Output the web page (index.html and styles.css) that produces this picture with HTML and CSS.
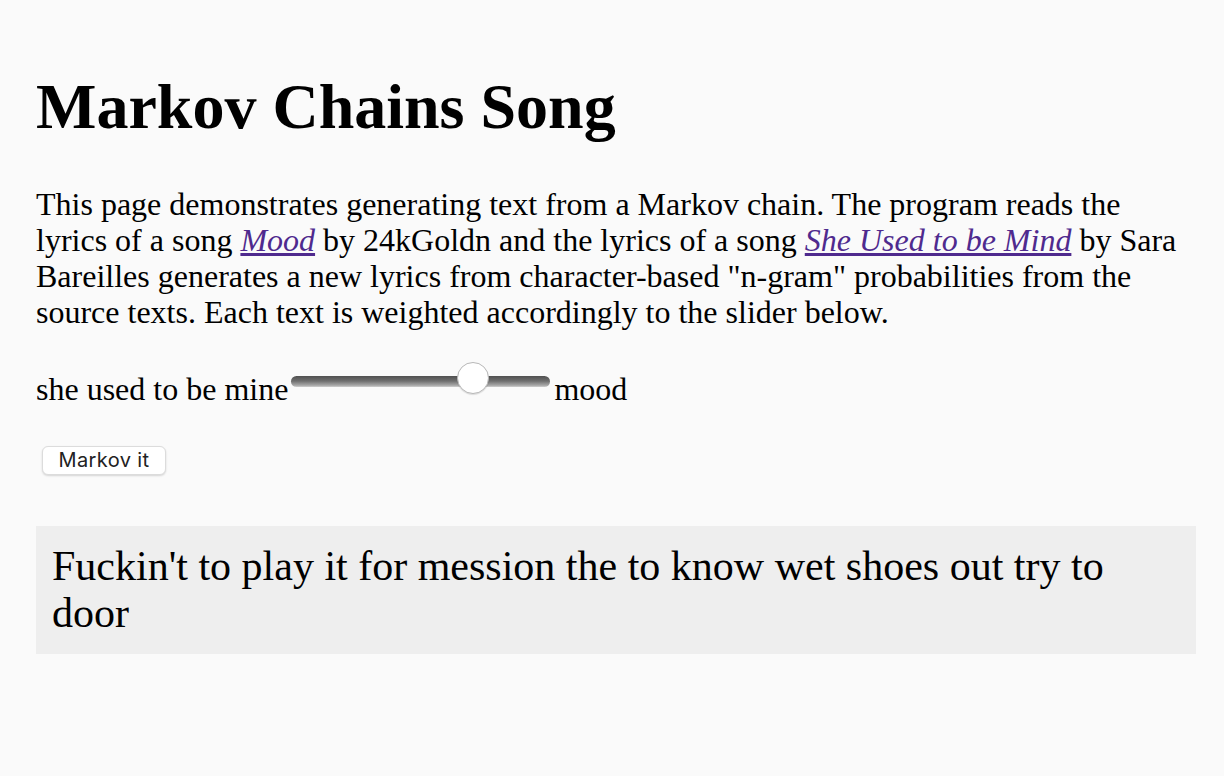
FILE: index.html
```html
<!DOCTYPE html>
<html lang="en">
<head>
<meta charset="utf-8">
<title>Markov Chains Song</title>
<link rel="stylesheet" href="styles.css">
</head>
<body>
<main class="page">
  <h1 class="title">Markov Chains Song</h1>
  <p class="intro">This page demonstrates generating text from a Markov chain. The program reads the lyrics of a song <a class="song-link" href="#"><em>Mood</em></a> by 24kGoldn and the lyrics of a song <a class="song-link" href="#"><em>She Used to be Mind</em></a> by Sara Bareilles generates a new lyrics from character-based "n-gram" probabilities from the source texts. Each text is weighted accordingly to the slider below.</p>
  <div class="slider-row">
    <span class="slider-label">she used to be mine</span>
    <input class="weight-slider" type="range" min="0" max="100" value="73">
    <span class="slider-label">mood</span>
  </div>
  <div class="actions">
    <button class="markov-btn" type="button">Markov it</button>
  </div>
  <div class="output">Fuckin't to play it for mession the to know wet shoes out try to door</div>
</main>
</body>
</html>
```
FILE: styles.css
```css
html, body {
  margin: 0;
  padding: 0;
  background: #fafafa;
}

body {
  font-family: "Liberation Serif", "Times New Roman", serif;
  font-size: 32px;
  color: #000;
}

.page {
  padding: 70px 28px 0 36px;
}

.title {
  font-size: 64px;
  line-height: 74px;
  font-weight: bold;
  margin: 0 0 42px 0;
}

.intro {
  line-height: 36px;
  margin: 0 0 41px 0;
}

.song-link {
  color: #4f2a8e;
  text-decoration: underline;
}

.slider-row {
  display: flex;
  align-items: flex-start;
  line-height: 36px;
}

.weight-slider {
  -webkit-appearance: none;
  appearance: none;
  width: 259px;
  height: 11px;
  margin: 5px 4px 0 3px;
  padding: 0;
  border-radius: 6px;
  background: linear-gradient(to bottom, #505050 0%, #6e6e6e 45%, #a8a8a8 85%, #d0d0d0 100%);
  outline: none;
}

.weight-slider::-webkit-slider-thumb {
  -webkit-appearance: none;
  appearance: none;
  width: 32px;
  height: 32px;
  margin-top: -8px;
  border-radius: 50%;
  background: #fff;
  border: 1px solid #b8b8b8;
  box-sizing: border-box;
  box-shadow: 0 1px 1px rgba(0,0,0,0.12);
}

.actions {
  margin-top: 31px;
  padding-left: 6px;
}

.markov-btn {
  font-family: "Inter", "Roboto", sans-serif;
  font-size: 20px;
  letter-spacing: 0.4px;
  color: #222;
  background: #fff;
  border: 1px solid #dcdcdc;
  border-radius: 6px;
  width: 124px;
  height: 29px;
  padding: 0;
  box-shadow: 0 1px 2px rgba(0,0,0,0.15);
}

.output {
  margin-top: 51px;
  background: #eeeeee;
  font-size: 42px;
  line-height: 47px;
  padding: 17px 16px;
}
```
